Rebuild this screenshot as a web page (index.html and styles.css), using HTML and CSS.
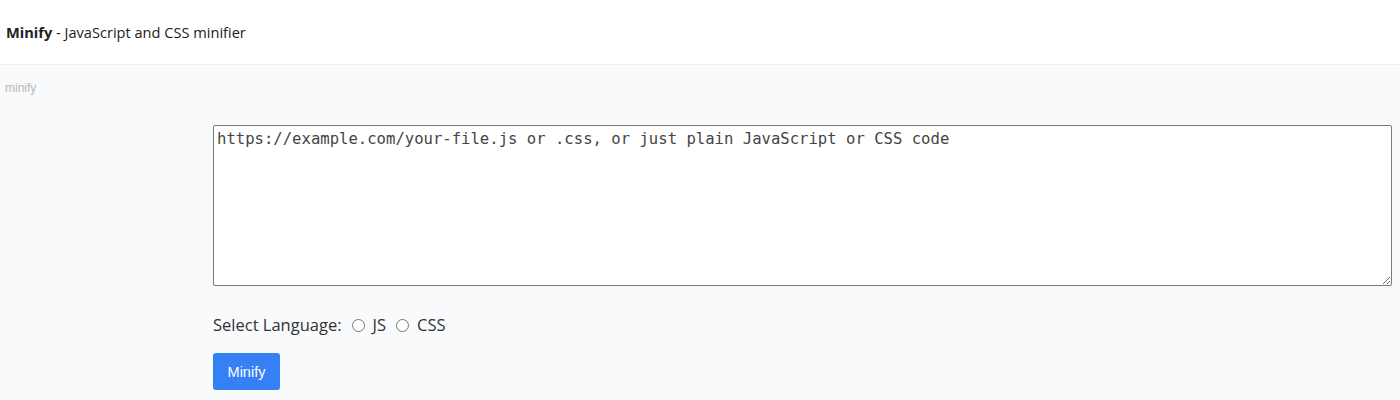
FILE: index.html
```html
<!DOCTYPE html>
<html>
<head>
<meta charset="utf-8">
<link rel="stylesheet" href="styles.css">
</head>
<body>
<header class="topbar">
  <div class="title"><strong>Minify</strong> - JavaScript and CSS minifier</div>
</header>
<main class="page">
  <div class="crumb">minify</div>
  <form class="tool">
    <textarea class="code" placeholder="https://example.com/your-file.js or .css, or just plain JavaScript or CSS code"></textarea>
    <div class="lang">
      <span>Select Language:</span>
      <label class="opt"><input type="radio" name="lang"> JS</label>
      <label class="opt"><input type="radio" name="lang"> CSS</label>
    </div>
    <button type="button" class="btn">Minify</button>
  </form>
</main>
</body>
</html>
```
FILE: styles.css
```css
html, body {
  margin: 0;
  padding: 0;
  background: #f9fafc;
  font-family: "Open Sans", "Noto Sans", sans-serif;
  color: #222;
}
.topbar {
  height: 64px;
  background: #fff;
  border-bottom: 1px solid #eef0f2;
  display: flex;
  align-items: center;
  padding-left: 6px;
}
.title {
  font-size: 14.6px;
  color: #222;
}
.title strong {
  font-weight: 700;
}
.page {
  height: 335px;
}
.crumb {
  font-family: "Liberation Sans", Arial, sans-serif;
  font-size: 12px;
  color: #b8b8b8;
  padding: 15px 0 0 5px;
  line-height: 16px;
}
.tool {
  margin: 29px 0 0 213px;
  width: 1179px;
  display: flex;
  flex-direction: column;
  align-items: flex-start;
}
.code {
  box-sizing: border-box;
  width: 1179px;
  height: 161px;
  border: 1px solid #7a7a7a;
  border-radius: 2px;
  background: #fff;
  padding: 3px 3px;
  font-family: "DejaVu Sans Mono", monospace;
  font-size: 15.6px;
  line-height: 20px;
  margin: 0;
  resize: vertical;
}
.code::placeholder {
  color: #444;
}
.lang {
  margin-top: 27px;
  font-size: 16.5px;
  display: flex;
  align-items: center;
  gap: 10px;
  color: #333;
  line-height: 24px;
}
.opt {
  display: flex;
  align-items: center;
  gap: 6px;
}
.opt input {
  margin: 0 2px 0 0;
  width: 13px;
  height: 13px;
}
.btn {
  margin-top: 16px;
  background: #3580f5;
  color: #fff;
  border: none;
  border-radius: 3px;
  width: 67px;
  height: 37px;
  font-family: "Liberation Sans", Arial, sans-serif;
  font-size: 14.5px;
  padding: 0;
}
```
